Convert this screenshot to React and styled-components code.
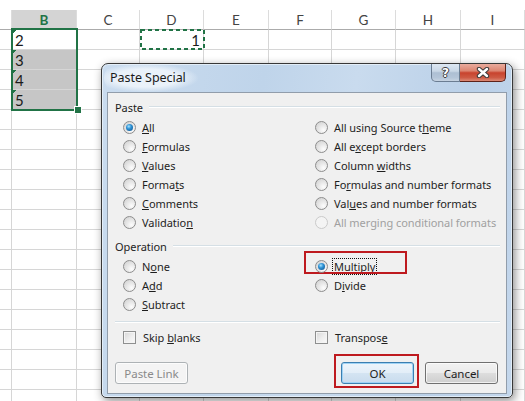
import React from "react";
import styled, { createGlobalStyle } from "styled-components";

const GlobalStyle = createGlobalStyle`
  html, body { margin: 0; padding: 0; background: #fff; }
  body { width: 525px; height: 401px; overflow: hidden; }
`;

//#region Sheet
const COLS = [
  { key: "A", label: "", width: 12 },
  { key: "B", label: "B", width: 65 },
  { key: "C", label: "C", width: 63 },
  { key: "D", label: "D", width: 64 },
  { key: "E", label: "E", width: 65 },
  { key: "F", label: "F", width: 63 },
  { key: "G", label: "G", width: 64 },
  { key: "H", label: "H", width: 65 },
  { key: "I", label: "I", width: 64 },
];

const CELLS = {
  "B0": { text: "2", flag: true },
  "B1": { text: "3", flag: true, fill: true },
  "B2": { text: "4", flag: true, fill: true },
  "B3": { text: "5", flag: true, fill: true },
  "D0": { text: "1", right: true },
};

const Sheet = styled.div`
  position: relative;
  width: 525px;
  height: 401px;
  overflow: hidden;
  box-sizing: border-box;
  padding-top: 10px;
  font-family: Lato, "Open Sans", sans-serif;
`;
const HeaderRow = styled.div`
  display: flex;
  height: 20px;
`;
const HeaderCell = styled.div`
  flex: 0 0 ${(p) => p.$w}px;
  box-sizing: border-box;
  display: flex;
  align-items: center;
  justify-content: center;
  border-right: 1px solid #dcdcdc;
  border-bottom: 1px solid #ababab;
  background: ${(p) => (p.$active ? "#d4d4d4" : "#fff")};
  color: ${(p) => (p.$active ? "#217346" : "#444")};
  font-weight: ${(p) => (p.$active ? 700 : 400)};
  font-size: 13.5px;
`;
const Row = styled.div`
  display: flex;
  height: 20px;
`;
const Cell = styled.div`
  flex: 0 0 ${(p) => p.$w}px;
  box-sizing: border-box;
  border-right: 1px solid #d6d6d6;
  border-bottom: 1px solid #d6d6d6;
  padding: 0 3px;
  font-size: 15px;
  line-height: 21px;
  color: #1b1b1b;
  text-align: ${(p) => (p.$right ? "right" : "left")};
  background: ${(p) =>
    (p.$flag ? "linear-gradient(135deg, #1f7244 0 3px, transparent 3px), " : "") +
    (p.$fill ? "#c6c6c6" : "#fff")};
`;
const Selection = styled.div`
  position: absolute;
  left: 11px;
  top: 28px;
  width: 67px;
  height: 83px;
  box-sizing: border-box;
  border: 2px solid #217346;
`;
const FillHandle = styled.div`
  position: absolute;
  left: 74px;
  top: 106px;
  width: 6px;
  height: 6px;
  background: #217346;
  border: 1px solid #fff;
`;
const Marquee = styled.svg`
  position: absolute;
  left: 140px;
  top: 29px;
`;
//#endregion Sheet

//#region Dialog
const Dialog = styled.div`
  position: absolute;
  left: 101px;
  top: 63px;
  width: 412px;
  height: 335px;
  box-sizing: border-box;
  display: flex;
  flex-direction: column;
  border: 1px solid #383838;
  border-radius: 7px 7px 5px 5px;
  background: linear-gradient(100deg, #cadcef 0%, #bfd4ea 35%, #c9dbee 55%, #bad0e8 80%, #c4d7ec 100%);
  box-shadow: inset 0 0 0 1px rgba(240, 246, 252, 0.7), 2px 3px 10px rgba(0, 0, 0, 0.45);
  font-family: "Segoe UI", "Noto Sans", sans-serif;
  font-size: 11px;
  letter-spacing: -0.05px;
  color: #1e1e1e;
  white-space: nowrap;
`;
const TitleBar = styled.div`
  display: flex;
  align-items: flex-start;
  justify-content: space-between;
  height: 28px;
  flex: 0 0 28px;
`;
const Title = styled.div`
  margin-left: 2px;
  padding: 0 12px 0 6px;
  line-height: 28px;
  font-size: 12.5px;
  color: #1a1a1a;
  border-radius: 14px;
  background: radial-gradient(ellipse at 45% 50%, rgba(236, 243, 250, 0.95) 45%, rgba(236, 243, 250, 0) 72%);
`;
const CaptionGroup = styled.div`
  display: flex;
  margin-right: 6px;
`;
const CaptionButton = styled.div`
  width: ${(p) => p.$w}px;
  height: 18px;
  box-sizing: border-box;
  display: flex;
  align-items: center;
  justify-content: center;
  border: 1px solid ${(p) => (p.$close ? "#5e2219" : "#6b7d92")};
  border-top: none;
  border-left-width: ${(p) => (p.$close ? 0 : 1)}px;
  border-radius: ${(p) => (p.$close ? "0 0 5px 0" : "0 0 0 5px")};
  background: ${(p) =>
    p.$close
      ? "linear-gradient(#e9ab9d 0%, #dc8672 40%, #c8432e 52%, #cd5a44 80%, #dc8a76 100%)"
      : "linear-gradient(#dde7f2 0%, #c9d7e6 42%, #adbfd3 52%, #b4c5d8 80%, #c7d4e2 100%)"};
`;
const HelpGlyph = styled.span`
  font-family: "DejaVu Sans", sans-serif;
  font-weight: 700;
  font-size: 12px;
  color: #fff;
  text-shadow: 1px 0 #3b3b3b, -1px 0 #3b3b3b, 0 1px #3b3b3b, 0 -1px #3b3b3b;
`;
const Panel = styled.div`
  flex: 1;
  margin: 0 5px 3px;
  display: flex;
  flex-direction: column;
  padding: 6px 6px 0 7px;
  border: 1px solid #919dab;
  background: #f0f0f0;
`;
const GroupLabel = styled.div`
  display: flex;
  align-items: center;
  gap: 6px;
  height: 16px;
  margin-top: ${(p) => p.$mt || 0}px;
  &::after {
    content: "";
    flex: 1;
    border-top: 1px solid #d5dfe5;
    border-bottom: 1px solid #fff;
  }
`;
const Separator = styled.div`
  margin-top: 7px;
  border-top: 1px solid #d5dfe5;
  border-bottom: 1px solid #fff;
`;
const OptionGrid = styled.div`
  display: grid;
  grid-auto-flow: column;
  grid-template-columns: 192px 1fr;
  grid-template-rows: repeat(${(p) => p.$rows}, 19px);
  padding-left: ${(p) => (p.$check ? 9 : 8)}px;
  margin-top: ${(p) => p.$mt}px;
`;
const Option = styled.div`
  position: relative;
  display: flex;
  align-items: center;
  gap: ${(p) => (p.$check ? 4 : 6)}px;
  color: ${(p) => (p.$disabled ? "#a0a0a0" : "#1e1e1e")};
  &::before {
    content: "";
    display: ${(p) => (p.$mark ? "block" : "none")};
    position: absolute;
    left: -11px;
    top: -6px;
    width: 103px;
    height: 23px;
    box-sizing: border-box;
    border: 2px solid #be1a1f;
  }
`;
const Radio = styled.span`
  position: relative;
  flex: 0 0 13px;
  width: 13px;
  height: 13px;
  box-sizing: border-box;
  border-radius: 50%;
  border: 1px solid ${(p) => (p.$disabled ? "#cacaca" : "#8d8d8d")};
  background: ${(p) =>
    p.$disabled
      ? "#f4f4f4"
      : "radial-gradient(circle at 68% 72%, #fdfdfd 0%, #e9e9e9 40%, #cdcdcd 100%)"};
  &::after {
    content: "";
    display: ${(p) => (p.$checked ? "block" : "none")};
    position: absolute;
    left: 2px;
    top: 2px;
    width: 7px;
    height: 7px;
    border-radius: 50%;
    background: radial-gradient(circle at 40% 35%, #a6e3ff 0%, #2f93d6 38%, #0b4a83 100%);
  }
`;
const Check = styled.span`
  flex: 0 0 13px;
  width: 13px;
  height: 13px;
  box-sizing: border-box;
  border: 1px solid #8e8f8f;
  background: linear-gradient(135deg, #d6d6d6 0%, #eeeeee 55%, #fafafa 100%);
  box-shadow: inset 0 0 0 1px #f4f4f4;
  margin-left: -1px;
  margin-right: 3px;
`;
const Label = styled.span`
  line-height: 15px;
  padding: 0 1px;
  margin-left: -1px;
  outline: ${(p) => (p.$focus ? "1px dotted #111" : "none")};
`;
const ButtonRow = styled.div`
  display: flex;
  gap: 11px;
  margin-top: 15px;
  padding-right: 2px;
`;
const Spacer = styled.div`
  flex: 1;
`;
const Button = styled.div`
  position: relative;
  width: 73px;
  height: 22px;
  box-sizing: border-box;
  display: flex;
  align-items: center;
  justify-content: center;
  border-radius: 3px;
  font-size: 11.5px;
  border: 1px solid ${(p) => (p.$disabled ? "#adb2b5" : p.$default ? "#3c7fb1" : "#707070")};
  background: ${(p) =>
    p.$disabled
      ? "#f4f4f4"
      : p.$default
      ? "linear-gradient(#eef5fb 0%, #e3eef8 48%, #d4e4f2 52%, #c9dcee 100%)"
      : "linear-gradient(#f2f2f2 0%, #ebebeb 48%, #dddddd 52%, #cfcfcf 100%)"};
  box-shadow: inset 0 0 0 1px ${(p) => (p.$default ? "#9fd3f5" : "rgba(255,255,255,0.7)")};
  color: ${(p) => (p.$disabled ? "#8a8a8a" : "#1e1e1e")};
  &::after {
    content: "";
    display: ${(p) => (p.$mark ? "block" : "none")};
    position: absolute;
    left: -8px;
    top: -9px;
    right: -6px;
    bottom: -5px;
    border: 2px solid #be1a1f;
  }
`;
//#endregion Dialog

const PASTE = [
  { pre: "", key: "A", post: "ll", checked: true },
  { pre: "", key: "F", post: "ormulas" },
  { pre: "", key: "V", post: "alues" },
  { pre: "Forma", key: "t", post: "s" },
  { pre: "", key: "C", post: "omments" },
  { pre: "Validatio", key: "n", post: "" },
  { pre: "All using Source t", key: "h", post: "eme" },
  { pre: "All e", key: "x", post: "cept borders" },
  { pre: "Column ", key: "w", post: "idths" },
  { pre: "Fo", key: "r", post: "mulas and number formats" },
  { pre: "Val", key: "u", post: "es and number formats" },
  { pre: "All merging conditional formats", key: "", post: "", disabled: true },
];

const OPERATION = [
  { pre: "N", key: "o", post: "ne" },
  { pre: "A", key: "d", post: "d" },
  { pre: "", key: "S", post: "ubtract" },
  { pre: "", key: "M", post: "ultiply", checked: true, mark: true, focus: true },
  { pre: "D", key: "i", post: "vide" },
];

function Text({ o }) {
  return (
    <>
      {o.pre}
      {o.key && <u>{o.key}</u>}
      {o.post}
    </>
  );
}

function RadioOption({ o }) {
  return (
    <Option $disabled={o.disabled} $mark={o.mark}>
      <Radio $checked={o.checked} $disabled={o.disabled} />
      <Label $focus={o.focus}>
        <Text o={o} />
      </Label>
    </Option>
  );
}

function CloseIcon() {
  return (
    <svg width="14" height="11" viewBox="0 0 14 11">
      <path d="M3 2 L11 9 M11 2 L3 9" stroke="#3a3a3a" strokeWidth="4.4" strokeLinecap="round" />
      <path d="M3 2 L11 9 M11 2 L3 9" stroke="#fff" strokeWidth="2.4" strokeLinecap="round" />
    </svg>
  );
}

export default function App() {
  const rows = Array.from({ length: 19 }, (_, i) => i);
  return (
    <>
      <GlobalStyle />
      <Sheet>
        <HeaderRow>
          {COLS.map((c) => (
            <HeaderCell key={c.key} $w={c.width} $active={c.key === "B"}>
              {c.label}
            </HeaderCell>
          ))}
        </HeaderRow>
        {rows.map((r) => (
          <Row key={r}>
            {COLS.map((c) => {
              const cell = CELLS[c.key + r] || {};
              return (
                <Cell key={c.key} $w={c.width} $flag={cell.flag} $fill={cell.fill} $right={cell.right}>
                  {cell.text}
                </Cell>
              );
            })}
          </Row>
        ))}
        <Selection />
        <FillHandle />
        <Marquee width="65" height="21" viewBox="0 0 65 21">
          <rect x="1" y="1" width="63" height="19" fill="none" stroke="#217346" strokeWidth="2" strokeDasharray="4 3" />
        </Marquee>

        <Dialog>
          <TitleBar>
            <Title>Paste Special</Title>
            <CaptionGroup>
              <CaptionButton $w={29}>
                <HelpGlyph>?</HelpGlyph>
              </CaptionButton>
              <CaptionButton $w={46} $close>
                <CloseIcon />
              </CaptionButton>
            </CaptionGroup>
          </TitleBar>
          <Panel>
            <GroupLabel>Paste</GroupLabel>
            <OptionGrid $rows={6} $mt={3}>
              {PASTE.map((o, i) => (
                <RadioOption key={i} o={o} />
              ))}
            </OptionGrid>
            <GroupLabel $mt={6}>Operation</GroupLabel>
            <OptionGrid $rows={3} $mt={3}>
              {OPERATION.map((o, i) => (
                <RadioOption key={i} o={o} />
              ))}
            </OptionGrid>
            <Separator />
            <OptionGrid $rows={1} $mt={5} $check>
              <Option $check>
                <Check />
                <Label>
                  Skip <u>b</u>lanks
                </Label>
              </Option>
              <Option $check>
                <Check />
                <Label>
                  Transpos<u>e</u>
                </Label>
              </Option>
            </OptionGrid>
            <ButtonRow>
              <Button $disabled>Paste Link</Button>
              <Spacer />
              <Button $default $mark>OK</Button>
              <Button>Cancel</Button>
            </ButtonRow>
          </Panel>
        </Dialog>
      </Sheet>
    </>
  );
}
